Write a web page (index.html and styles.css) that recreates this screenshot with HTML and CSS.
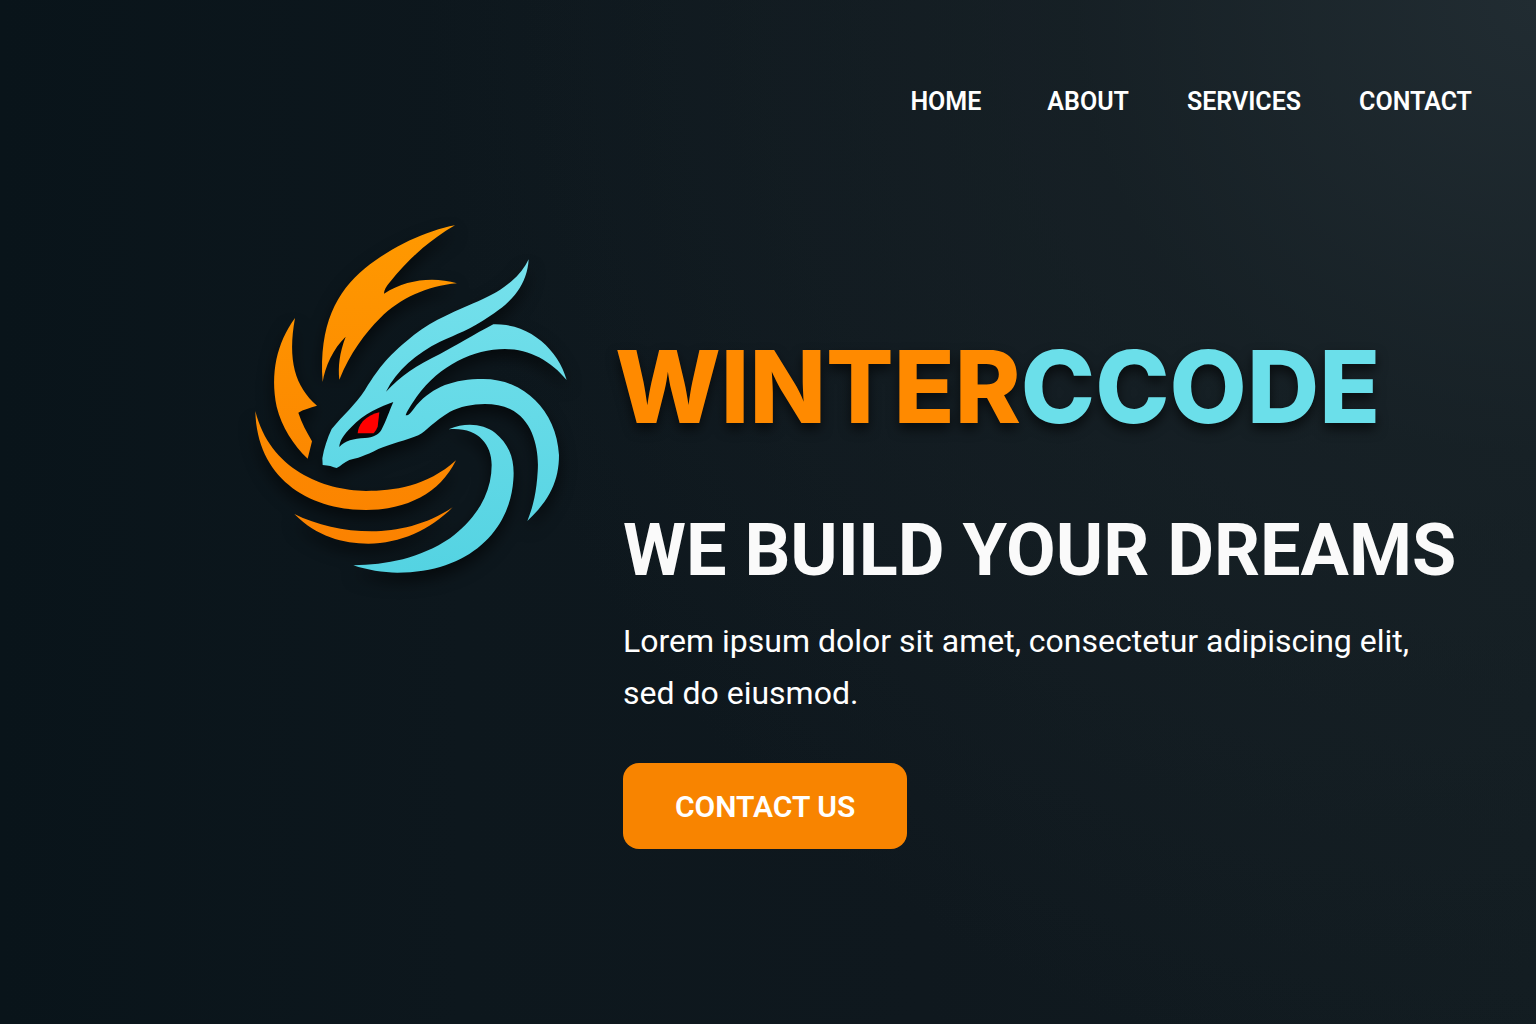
FILE: index.html
```html
<!DOCTYPE html>
<html lang="en">
<head>
<meta charset="utf-8">
<meta name="viewport" content="width=device-width, initial-scale=1">
<title>WinterCCode</title>
<link rel="stylesheet" href="styles.css">
</head>
<body>
<header class="site-header">
  <nav class="site-nav" aria-label="Main">
    <a class="nav-link nav-link-first" href="#home">HOME</a>
    <a class="nav-link" href="#about">ABOUT</a>
    <a class="nav-link" href="#services">SERVICES</a>
    <a class="nav-link" href="#contact">CONTACT</a>
  </nav>
</header>
<main class="hero">
  <svg class="logo" viewBox="45 45 936 1044" role="img" aria-label="Dragon logo">
    <defs>
      <linearGradient id="flame" gradientUnits="userSpaceOnUse" x1="0" y1="45" x2="0" y2="1000">
        <stop offset="0" stop-color="#ff9900"/>
        <stop offset="1" stop-color="#fb8200"/>
      </linearGradient>
      <linearGradient id="ice" gradientUnits="userSpaceOnUse" x1="0" y1="148" x2="0" y2="1088">
        <stop offset="0" stop-color="#76e1ec"/>
        <stop offset="1" stop-color="#54d3e2"/>
      </linearGradient>
    </defs>
    <g fill="url(#flame)">
      <path d="M645 46C560 62 455 110 375 175C290 245 236 345 248 516C255 470 280 415 317 380C298 430 294 470 298 509C330 430 375 370 420 325C480 265 560 228 651 220C580 200 500 208 432 251C432 240 438 230 450 216C500 155 560 95 645 46Z"/>
      <path d="M165 324C110 400 90 490 110 590C125 650 160 705 203 746L216 694C200 665 185 640 175 608C190 598 210 594 231 587C165 530 142 450 165 324Z"/>
      <path d="M46 603C50 800 200 900 378 900C500 900 600 850 648 751C560 830 460 843 378 843C250 840 90 780 46 603Z"/>
      <path d="M163 912C230 980 310 1001 385 1001C480 1001 570 960 638 892C560 945 470 964 395 964C310 964 230 945 163 912Z"/>
    </g>
    <g fill="url(#ice)">
      <path d="M866 148C840 205 780 248 700 280C620 315 560 340 500 393C430 450 400 500 375 540C345 585 310 615 275 657C262 685 252 715 247 745L248 765Q262 767 271 768Q282 772 290 774C303 768 312 757 328 750C350 745 375 738 415 717C450 703 500 690 535 676C560 662 580 635 630 605C680 580 760 573 810 597C880 630 898 720 893 785C890 840 880 890 862 933C930 870 957 810 957 735C950 600 850 507 730 507C640 507 580 530 530 585C515 605 508 617 497 616C500 605 510 590 530 560C600 465 700 417 795 417C870 417 935 455 980 510C955 420 870 340 760 343C700 375 650 405 600 432C530 465 480 500 438 545C470 480 530 430 600 395C650 372 690 360 750 318C820 275 862 220 866 148Z"/>
      <path d="M626 658C680 635 730 643 765 668C810 705 825 750 820 810C810 960 690 1088 472 1088C430 1088 380 1080 340 1066C440 1065 540 1045 630 985C710 925 755 850 755 765C755 700 710 650 626 658Z"/>
    </g>
    <path fill="#05080c" d="M460 576C425 588 370 612 335 650C310 675 299 692 298 711C315 692 340 686 375 684C400 683 415 674 424 660C440 630 447 605 460 576Z"/>
    <path fill="#ff0000" d="M418 607C400 611 382 620 369 633C358 646 354 658 353 670L401 670Q409 661 413 650Z"/>
  </svg>
  <div class="hero-copy">
    <h1 class="brand"><span class="brand-warm">WINTER</span><span class="brand-cool">CCODE</span></h1>
    <div class="pitch">
      <h2 class="tagline">WE BUILD YOUR DREAMS</h2>
      <p class="lead">Lorem ipsum dolor sit amet, consectetur adipiscing elit, sed do eiusmod.</p>
      <button class="cta" type="button">CONTACT US</button>
    </div>
  </div>
</main>
</body>
</html>
```
FILE: styles.css
```css
* {
  box-sizing: border-box;
}

body {
  margin: 0;
  min-height: 100vh;
  font-family: Roboto, "Liberation Sans", sans-serif;
  color: #fff;
  background:
    radial-gradient(circle at 100% 0, #212c32 0, rgba(26, 36, 41, 0.6) 25%, rgba(22, 32, 37, 0) 60%),
    linear-gradient(90deg, #09141a 0, #0d171d 30%, #0f181e 60%, #121c21 100%);
}

.site-header {
  padding: 82px 64px 0;
}

.site-nav {
  display: flex;
  justify-content: flex-end;
  gap: 58px;
}

.nav-link {
  color: #fff;
  font-size: 25px;
  line-height: 40px;
  font-weight: 600;
  text-decoration: none;
}

.nav-link-first {
  margin-right: 8px;
}

.hero {
  display: flex;
  align-items: flex-start;
  gap: 48px;
  padding: 103px 64px 0 255px;
}

.logo {
  flex: none;
  width: 312px;
  height: 348px;
  overflow: visible;
  filter: drop-shadow(0 8px 8px rgba(0, 0, 0, 0.6));
}

.hero-copy {
  flex: 1;
  min-width: 0;
  padding-top: 102px;
}

.brand {
  margin: 0;
  font-family: Inter, sans-serif;
  font-size: 100px;
  line-height: 120px;
  font-weight: 800;
  white-space: nowrap;
  filter: drop-shadow(0 6px 6px rgba(0, 0, 0, 0.6));
}

.brand-warm {
  color: #ff8a00;
}

.brand-cool {
  color: #6bdfea;
}

.pitch {
  padding: 64px 0 0 8px;
}

.tagline {
  margin: 0;
  font-size: 72px;
  line-height: 80px;
  font-weight: 700;
  white-space: nowrap;
  color: #fafafa;
}

.lead {
  margin: 24px 0 0;
  max-width: 800px;
  font-size: 32px;
  line-height: 52px;
}

.cta {
  margin: 44px 0 0;
  padding: 0 52px;
  height: 86px;
  border: 0;
  border-radius: 16px;
  font-family: inherit;
  font-size: 30px;
  font-weight: 600;
  color: #fff;
  background: #f88400;
}
```
